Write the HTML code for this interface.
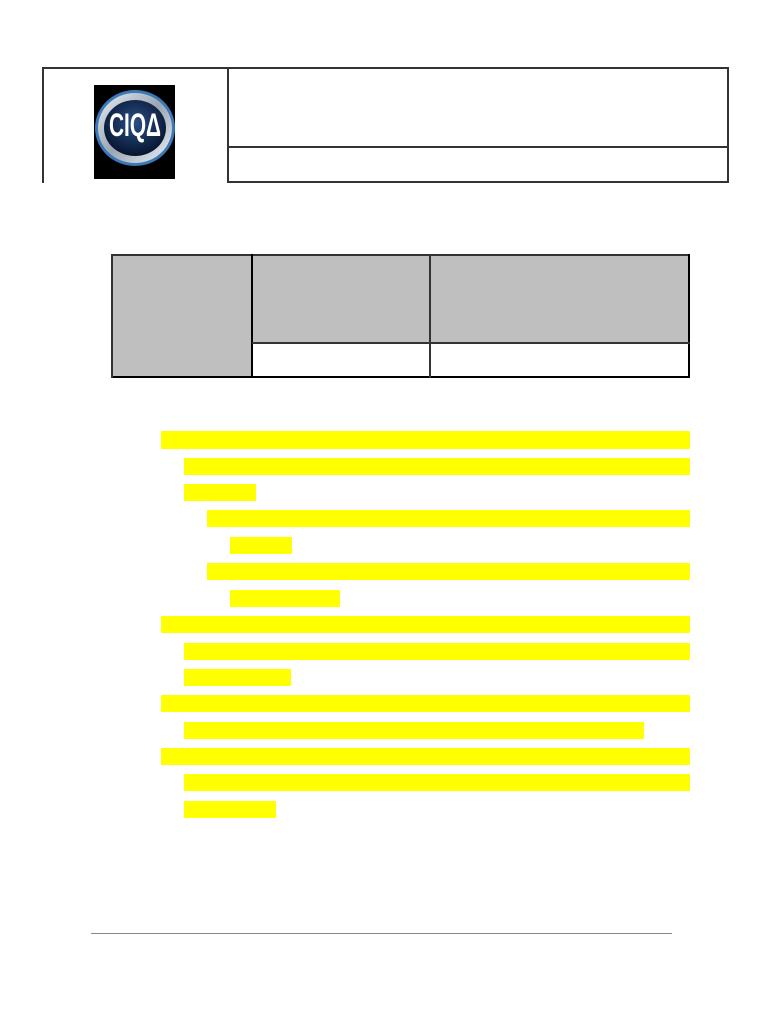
<!DOCTYPE html>
<html><head><meta charset="utf-8"><style>
body{margin:0;width:782px;height:1012px;background:#fff;position:relative;overflow:hidden;font-family:"Liberation Sans",sans-serif}
.a{position:absolute}
.l{position:absolute;background:#333}
.y{position:absolute;background:#ffff00;height:17px}
</style></head><body>
<!-- header -->
<div class="l" style="left:42px;top:67px;width:687px;height:2px"></div>
<div class="l" style="left:42px;top:67px;width:2px;height:116px"></div>
<div class="l" style="left:227px;top:67px;width:2px;height:116px"></div>
<div class="l" style="left:727px;top:67px;width:2px;height:116px"></div>
<div class="l" style="left:227px;top:146px;width:502px;height:2px"></div>
<div class="l" style="left:227px;top:181px;width:502px;height:2px"></div>
<svg class="a" style="left:94px;top:85px" width="81" height="94" viewBox="0 0 81 94">
<defs><radialGradient id="g" cx="50%" cy="40%" r="60%"><stop offset="0" stop-color="#2b4f86"/><stop offset="1" stop-color="#06142e"/></radialGradient>
<linearGradient id="s" x1="0" y1="0" x2="1" y2="1"><stop offset="0" stop-color="#e8eef4"/><stop offset="0.5" stop-color="#9aa6b2"/><stop offset="1" stop-color="#eef2f6"/></linearGradient></defs>
<rect width="81" height="94" fill="#000"/>
<ellipse cx="41" cy="43" rx="40" ry="38" fill="#3a78b8"/>
<ellipse cx="41" cy="43" rx="37" ry="35" fill="url(#s)"/>
<ellipse cx="41" cy="43" rx="31" ry="28" fill="url(#g)"/>
<text x="41" y="51" text-anchor="middle" font-family="Liberation Sans Narrow,Liberation Sans,sans-serif" font-weight="bold" font-size="32" fill="#fff" textLength="52" lengthAdjust="spacingAndGlyphs">CIQΔ</text>
</svg>
<!-- table -->
<div class="a" style="left:111px;top:254px;width:579px;height:89px;background:#bfbfbf"></div>
<div class="a" style="left:111px;top:343px;width:141px;height:34px;background:#bfbfbf"></div>
<div class="l" style="left:111px;top:254px;width:579px;height:2px"></div>
<div class="l" style="left:111px;top:376px;width:579px;height:2px;background:#000"></div>
<div class="l" style="left:111px;top:254px;width:2px;height:124px"></div>
<div class="l" style="left:688px;top:254px;width:2px;height:124px;background:#000"></div>
<div class="l" style="left:251px;top:254px;width:2px;height:124px;background:#000"></div>
<div class="l" style="left:429px;top:254px;width:2px;height:124px"></div>
<div class="l" style="left:252px;top:342px;width:438px;height:2px"></div>
<!-- highlights -->
<div class="y" style="left:161px;top:431px;width:529px;height:18px"></div>
<div class="y" style="left:184px;top:458px;width:506px"></div>
<div class="y" style="left:184px;top:484px;width:72px"></div>
<div class="y" style="left:207px;top:510px;width:483px"></div>
<div class="y" style="left:230px;top:537px;width:62px"></div>
<div class="y" style="left:207px;top:563px;width:483px"></div>
<div class="y" style="left:230px;top:590px;width:110px"></div>
<div class="y" style="left:161px;top:616px;width:529px"></div>
<div class="y" style="left:184px;top:643px;width:506px"></div>
<div class="y" style="left:184px;top:669px;width:107px"></div>
<div class="y" style="left:161px;top:695px;width:529px"></div>
<div class="y" style="left:184px;top:722px;width:460px"></div>
<div class="y" style="left:161px;top:748px;width:529px"></div>
<div class="y" style="left:184px;top:774px;width:506px"></div>
<div class="y" style="left:184px;top:801px;width:92px"></div>
<!-- footer -->
<div class="a" style="left:91px;top:933px;width:581px;height:1px;background:#888"></div>
</body></html>
